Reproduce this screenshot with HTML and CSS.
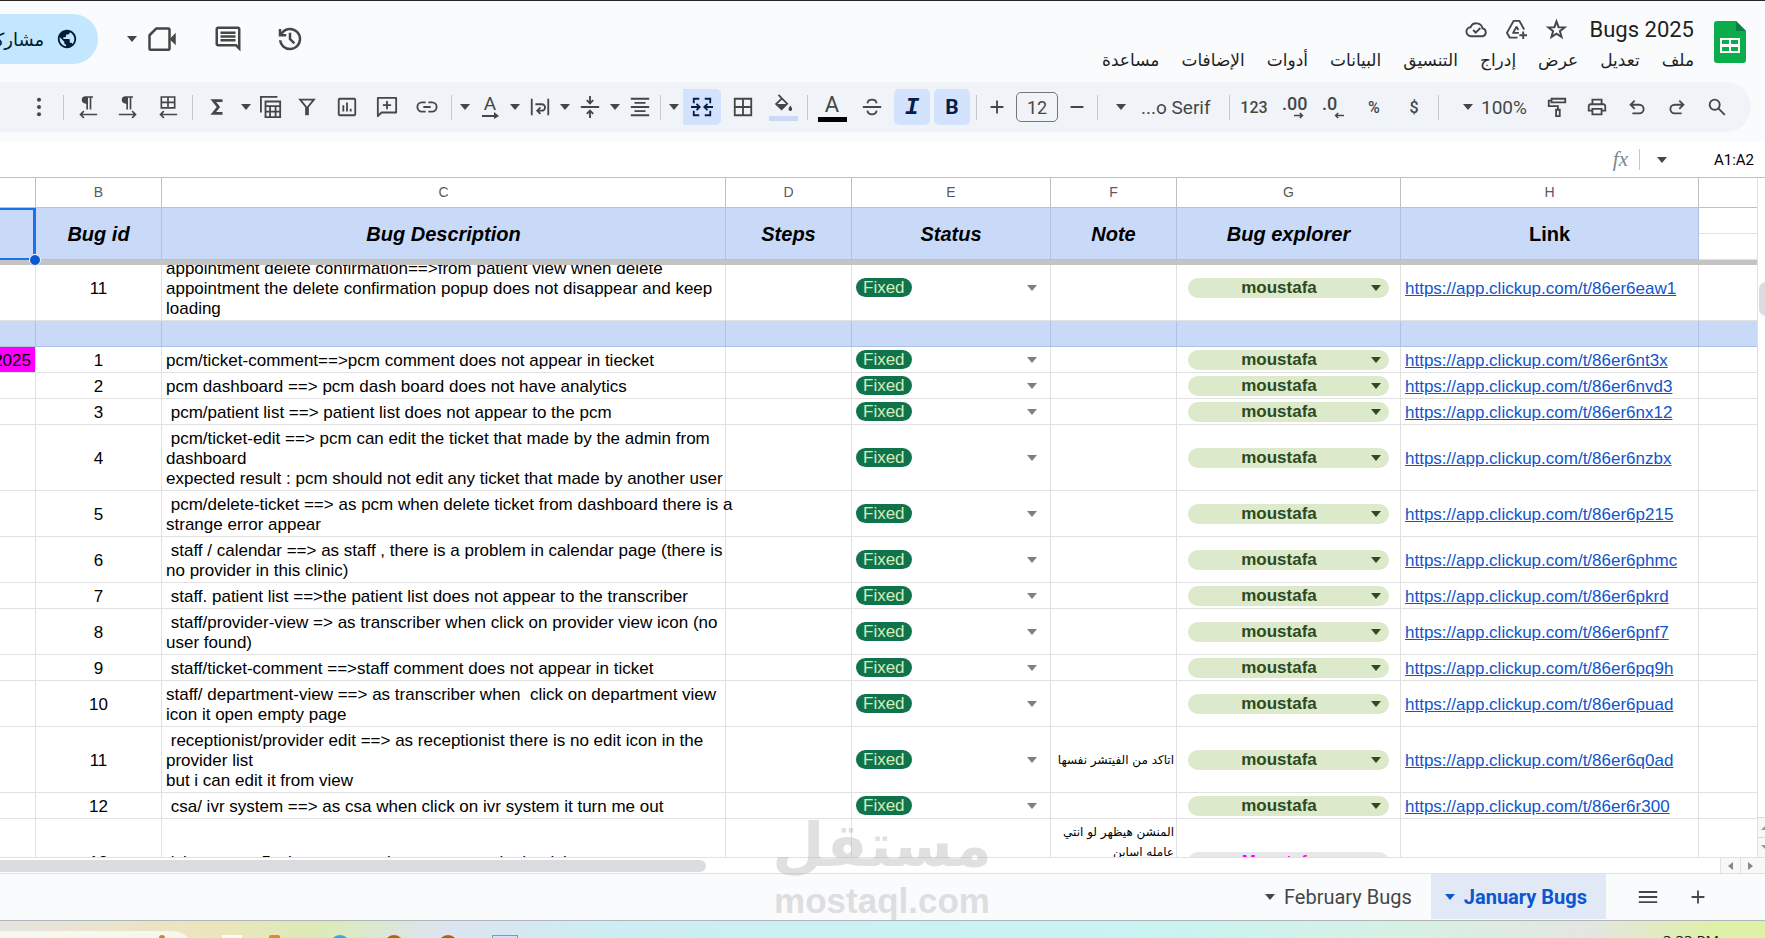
FILE: index.html
```html
<!DOCTYPE html>
<html lang="ar" dir="rtl">
  <head>
    <meta charset="UTF-8" />
    <meta name="viewport" content="width=device-width, initial-scale=1.0" />
    <title>Bugs 2025</title>
    <link rel="stylesheet" href="styles.css">
  </head>

  <body>
    <!-- icon sprite -->
    <svg class="sprite" aria-hidden="true">
      <symbol id="caret" viewBox="0 0 10 6"><path d="M0 0h10L5 6z" fill="currentColor"/></symbol>
      <symbol id="history" viewBox="0 0 24 24"><path fill="currentColor" d="M12 21q-3.45 0-6.012-2.287T3.05 13H5.1q.35 2.6 2.313 4.3T12 19q2.925 0 4.963-2.037T19 12t-2.037-4.962T12 5q-1.725 0-3.225.8T6.25 8H9v2H3V4h2v2.35q1.275-1.6 3.113-2.475T12 3q1.875 0 3.513.713t2.85 1.924 1.925 2.85T21 12t-.712 3.513-1.925 2.85-2.85 1.925T12 21m2.8-4.8L11 12.4V7h2v4.6l3.2 3.2z"/></symbol>
      <symbol id="comment" viewBox="0 0 24 24"><path fill="currentColor" d="M21.99 4c0-1.1-.89-2-1.99-2H4c-1.1 0-2 .9-2 2v12c0 1.1.9 2 2 2h14l4 4-.01-18zM20 4v13.17L18.83 16H4V4h16zM6 12h12v2H6v-2zm0-3h12v2H6V9zm0-3h12v2H6V6z"/></symbol>
      <symbol id="meet" viewBox="0 0 24 24"><path fill="none" stroke="currentColor" stroke-width="2" stroke-linejoin="round" d="M7.500 3.500H17q1 0 1 1v15q0 1-1 1H3q-1 0-1-1V9z"/><path fill="currentColor" d="M18.500 11.500 23 7v10l-4.500-4.500z"/></symbol>
      <symbol id="globe" viewBox="0 0 24 24"><path fill="currentColor" d="M12 2C6.480 2 2 6.480 2 12s4.480 10 10 10 10-4.480 10-10S17.520 2 12 2zm-1 17.930c-3.950-.49-7-3.850-7-7.930 0-.62.08-1.210.21-1.790L9 15v1c0 1.100.9 2 2 2v1.930zm6.900-2.540c-.26-.81-1-1.390-1.900-1.390h-1v-3c0-.55-.45-1-1-1H8v-2h2c.55 0 1-.45 1-1V7h2c1.100 0 2-.9 2-2v-.41c2.930 1.190 5 4.060 5 7.410 0 2.080-.8 3.970-2.100 5.390z"/></symbol>
      <symbol id="star" viewBox="0 0 24 24"><path fill="none" stroke="currentColor" stroke-width="2" d="m12 3.500 2.200 6.100 6.300.2-5 3.900 1.800 6.200-5.300-3.600-5.300 3.600 1.800-6.200-5-3.900 6.300-.2z"/></symbol>
      <symbol id="drive" viewBox="0 0 24 24"><path fill="none" stroke="currentColor" stroke-width="2" stroke-linejoin="round" d="M13 20.500H5L2 15.500 9 3h6l5 9M12 9l-3.500 6.500h6M12 9l2 3.500M19 14v8M15 18h8"/></symbol>
      <symbol id="cloud" viewBox="0 0 24 24"><path fill="none" stroke="currentColor" stroke-width="2" d="M6.500 19a4.700 4.700 0 0 1-.6-9.400 6.500 6.500 0 0 1 12.400 1.200A4.200 4.200 0 0 1 18.500 19zM8.500 12.500l2.700 2.700 4.800-4.800"/></symbol>
      <symbol id="search" viewBox="0 0 24 24"><g fill="none" stroke="currentColor" stroke-width="2"><circle cx="9.500" cy="9.500" r="5.500"/><path d="m13.500 13.500 7 7"/></g></symbol>
      <symbol id="undo" viewBox="0 0 24 24"><path fill="none" stroke="currentColor" stroke-width="2" d="M9.500 5 5 9.500 9.500 14M5 9.500h9.500a4.700 4.700 0 0 1 0 9.500H7"/></symbol>
      <symbol id="redo" viewBox="0 0 24 24"><path fill="none" stroke="currentColor" stroke-width="2" d="M14.500 5 19 9.500 14.500 14M19 9.500H9.500a4.700 4.700 0 0 0 0 9.500H17"/></symbol>
      <symbol id="print" viewBox="0 0 24 24"><path fill="currentColor" d="M19 8h-1V3H6v5H5c-1.660 0-3 1.340-3 3v6h4v4h12v-4h4v-6c0-1.660-1.340-3-3-3zM8 5h8v3H8V5zm8 12v2H8v-4h8v2zm2-2v-2H6v2H4v-4c0-.55.45-1 1-1h14c.55 0 1 .45 1 1v4h-2z"/></symbol>
      <symbol id="roller" viewBox="0 0 24 24"><g fill="none" stroke="currentColor" stroke-width="2"><path d="M6 3h15v4H6zM6 5H3v6h10v4"/><path d="M11 15h4v7h-4z"/></g></symbol>
      <symbol id="arrow-l" viewBox="0 0 12 8"><path fill="none" stroke="currentColor" stroke-width="2" d="M12 4H2M5 1 2 4l3 3"/></symbol>
      <symbol id="arrow-r" viewBox="0 0 12 8"><path fill="none" stroke="currentColor" stroke-width="2" d="M0 4h10M7 1l3 3-3 3"/></symbol>
      <symbol id="arrow-long" viewBox="0 0 17 7"><path fill="none" stroke="currentColor" stroke-width="2" d="M0 4h13"/><path fill="currentColor" d="m12 0 5 4-5 3z"/></symbol>
      <symbol id="plus" viewBox="0 0 24 24"><path fill="none" stroke="currentColor" stroke-width="2" d="M12 5v14M5 12h14"/></symbol>
      <symbol id="minus" viewBox="0 0 24 24"><path fill="none" stroke="currentColor" stroke-width="2" d="M5 12h14"/></symbol>
      <symbol id="strike" viewBox="0 0 24 24"><path fill="none" stroke="currentColor" stroke-width="2" d="M2 12h20M17 8q-.5-4-5-4T7 8M7 16q.5 4 5 4t5-4"/></symbol>
      <symbol id="bucket" viewBox="0 0 24 24"><path fill="none" stroke="currentColor" stroke-width="2" d="m7 1 9.500 9.500-6 6L4.500 11l6-6"/><path fill="currentColor" d="M4.500 11h12l-6 6zM20 12.500s-2 2.600-2 4a2 2 0 0 0 4 0c0-1.400-2-4-2-4z"/></symbol>
      <symbol id="borders" viewBox="0 0 24 24"><path fill="none" stroke="currentColor" stroke-width="2" d="M3 3h18v18H3zM12 3v18M3 12h18"/></symbol>
      <symbol id="merge" viewBox="0 0 24 24"><path fill="none" stroke="currentColor" stroke-width="2" d="M9 3H3v5M3 16v5h6M15 3h6v5M21 16v5h-6M0 12h9M6 8.500 9.500 12 6 15.500M24 12h-9M18 8.500 14.500 12l3.500 3.500"/></symbol>
      <symbol id="align" viewBox="0 0 24 24"><path fill="none" stroke="currentColor" stroke-width="2" d="M2 3h20M6 7.500h12M2 12h20M6 16.500h12M2 21h20"/></symbol>
      <symbol id="valign" viewBox="0 0 24 24"><path fill="none" stroke="currentColor" stroke-width="2" d="M2 12h20M12 0v7M8.500 4.500 12 8l3.500-3.500M12 24v-7M8.500 19.500 12 16l3.500 3.500"/></symbol>
      <symbol id="wrap" viewBox="0 0 24 24"><path fill="none" stroke="currentColor" stroke-width="2" d="M3 3v18M21 3v18M7 9h7a3.500 3.500 0 0 1 0 7h-4M12.500 12.500 9 16l3.500 3.500"/></symbol>
      <symbol id="link" viewBox="0 0 24 24"><path fill="none" stroke="currentColor" stroke-width="2" d="M10.500 17H6.500a5 5 0 0 1 0-10h4M13.500 7h4a5 5 0 0 1 0 10h-4M8 12h8"/></symbol>
      <symbol id="add-comment" viewBox="0 0 24 24"><path fill="none" stroke="currentColor" stroke-width="2" stroke-linejoin="round" d="M2 22V2h20v16H6zM12 5.500v9M7.500 10h9"/></symbol>
      <symbol id="chart" viewBox="0 0 24 24"><g fill="none" stroke="currentColor" stroke-width="2"><rect x="3" y="3" width="18" height="18" rx="1"/><path d="M8 10v7M12 7v10M16 14v3"/></g></symbol>
      <symbol id="filter" viewBox="0 0 24 24"><path fill="none" stroke="currentColor" stroke-width="2" d="M4.500 4h15L13 12v8h-2v-8z"/></symbol>
      <symbol id="table" viewBox="0 0 24 24"><path fill="none" stroke="currentColor" stroke-width="2" d="M1 18V1h18M6 6h16v17H6zM6 11h16M6 17h16M11 11v12M17 11v12"/></symbol>
      <symbol id="sigma" viewBox="0 0 24 24"><path fill="none" stroke="currentColor" stroke-width="3" d="M18 5H8l5.500 7L8 19h10"/></symbol>
      <symbol id="rtl-sheet" viewBox="0 0 24 28"><path fill="none" stroke="currentColor" stroke-width="2" d="M4 2h16v13H4zM12 2v13M4 8.500h16M23 23H3M7 19l-4 4 4 4"/></symbol>
      <symbol id="para-r" viewBox="0 0 24 28"><path fill="currentColor" d="M11 2H9a3.500 3.500 0 0 0 0 7h2z"/><path fill="none" stroke="currentColor" stroke-width="2" d="M18 2H9a3.500 3.500 0 0 0 0 7h2M11 2v15M15 2v15M1 23h20M17 19l4 4-4 4"/></symbol>
      <symbol id="para-l" viewBox="0 0 24 28"><path fill="currentColor" d="M11 2H9a3.500 3.500 0 0 0 0 7h2z"/><path fill="none" stroke="currentColor" stroke-width="2" d="M18 2H9a3.500 3.500 0 0 0 0 7h2M11 2v15M15 2v15M23 23H3M7 19l-4 4 4 4"/></symbol>
      <symbol id="more" viewBox="0 0 24 24"><g fill="currentColor"><circle cx="12" cy="4" r="2.200"/><circle cx="12" cy="12" r="2.200"/><circle cx="12" cy="20" r="2.200"/></g></symbol>
      <symbol id="menu" viewBox="0 0 24 24"><path fill="none" stroke="currentColor" stroke-width="2" d="M2 6.500h20M2 12h20M2 17.500h20"/></symbol>
    </svg>

    <header class="top">
      <svg class="logo" viewBox="0 0 32 42"><path fill="#0bac4b" d="M3 0h19l10 10v29q0 3-3 3H3q-3 0-3-3V3q0-3 3-3z"/><path fill="#0b8043" d="M22 0v10h10z"/><path fill="#fff" d="M6 17h20v15H6z"/><path fill="#0bac4b" d="M8 19h7v4H8zm9 0h7v4h-7zm-9 7h7v4H8zm9 0h7v4h-7z"/></svg>
      <div class="doc">
        <div class="doc-row">
          <h1 class="doc-title" dir="ltr">Bugs 2025</h1>
          <button class="small-btn" aria-label="star"><svg><use href="#star"/></svg></button>
          <button class="small-btn" aria-label="drive"><svg><use href="#drive"/></svg></button>
          <button class="small-btn" aria-label="saved"><svg><use href="#cloud"/></svg></button>
        </div>
        <nav class="menus">
          <button>ملف</button>
          <button>تعديل</button>
          <button>عرض</button>
          <button>إدراج</button>
          <button>التنسيق</button>
          <button>البيانات</button>
          <button>أدوات</button>
          <button>الإضافات</button>
          <button>مساعدة</button>
        </nav>
      </div>
      <div class="actions">
        <button class="big-btn" aria-label="history"><svg><use href="#history"/></svg></button>
        <button class="big-btn" aria-label="comments"><svg><use href="#comment"/></svg></button>
        <button class="meet-btn" aria-label="meet"><svg><use href="#meet"/></svg><svg class="caret"><use href="#caret"/></svg></button>
        <button class="share-btn"><svg><use href="#globe"/></svg>مشاركة</button>
      </div>
    </header>

    <div class="toolbar">
      <button class="tool" aria-label="search"><svg><use href="#search"/></svg></button>
      <button class="tool" aria-label="redo"><svg><use href="#redo"/></svg></button>
      <button class="tool" aria-label="undo"><svg><use href="#undo"/></svg></button>
      <button class="tool" aria-label="print"><svg><use href="#print"/></svg></button>
      <button class="tool" aria-label="paint format"><svg><use href="#roller"/></svg></button>
      <div class="pick zoom"><select aria-label="zoom"><option>100%</option></select><svg class="caret"><use href="#caret"/></svg></div>
      <i class="sep"></i>
      <button class="tool">$</button>
      <button class="tool">%</button>
      <button class="tool decimals left">.0<svg><use href="#arrow-l"/></svg></button>
      <button class="tool decimals">.00<svg><use href="#arrow-r"/></svg></button>
      <button class="tool">123</button>
      <i class="sep"></i>
      <div class="pick font"><select aria-label="font"><option>...o Serif</option></select><svg class="caret"><use href="#caret"/></svg></div>
      <i class="sep"></i>
      <button class="step" aria-label="smaller"><svg><use href="#minus"/></svg></button>
      <input class="size" aria-label="font size" value="12" />
      <button class="step" aria-label="bigger"><svg><use href="#plus"/></svg></button>
      <i class="sep"></i>
      <button class="tool active bold">B</button>
      <button class="tool active italic">I</button>
      <button class="tool" aria-label="strikethrough"><svg><use href="#strike"/></svg></button>
      <button class="tool color-btn text-color">A</button>
      <i class="sep"></i>
      <button class="tool color-btn fill-color" aria-label="fill color"><svg><use href="#bucket"/></svg></button>
      <button class="tool" aria-label="borders"><svg><use href="#borders"/></svg></button>
      <button class="tool active merge" aria-label="merge"><svg><use href="#merge"/></svg></button>
      <button class="drop" aria-label="merge options"><svg class="caret"><use href="#caret"/></svg></button>
      <i class="sep"></i>
      <button class="tool-drop" aria-label="align"><svg><use href="#align"/></svg><svg class="caret"><use href="#caret"/></svg></button>
      <button class="tool-drop" aria-label="vertical align"><svg><use href="#valign"/></svg><svg class="caret"><use href="#caret"/></svg></button>
      <button class="tool-drop" aria-label="wrap"><svg><use href="#wrap"/></svg><svg class="caret"><use href="#caret"/></svg></button>
      <button class="tool-drop" aria-label="rotate"><span class="rotate">A<svg><use href="#arrow-long"/></svg></span><svg class="caret"><use href="#caret"/></svg></button>
      <i class="sep"></i>
      <button class="tool" aria-label="link"><svg><use href="#link"/></svg></button>
      <button class="tool" aria-label="add comment"><svg><use href="#add-comment"/></svg></button>
      <button class="tool" aria-label="chart"><svg><use href="#chart"/></svg></button>
      <button class="tool" aria-label="filter"><svg><use href="#filter"/></svg></button>
      <button class="tool-drop" aria-label="tables"><svg><use href="#table"/></svg><svg class="caret"><use href="#caret"/></svg></button>
      <button class="tool" aria-label="functions"><svg><use href="#sigma"/></svg></button>
      <i class="sep"></i>
      <button class="tool" aria-label="sheet direction"><svg class="tall"><use href="#rtl-sheet"/></svg></button>
      <button class="tool" aria-label="left to right"><svg class="tall"><use href="#para-r"/></svg></button>
      <button class="tool" aria-label="right to left"><svg class="tall"><use href="#para-l"/></svg></button>
      <i class="sep"></i>
      <button class="tool" aria-label="more"><svg><use href="#more"/></svg></button>
    </div>

    <div class="formula">
      <input class="name-box" dir="ltr" aria-label="name box" value="A1:A2" />
      <button class="name-drop" aria-label="ranges"><svg class="caret"><use href="#caret"/></svg></button>
      <i class="sep"></i>
      <label class="fx" for="formula">fx</label>
      <input class="formula-input" id="formula" />
    </div>

    <main class="grid" dir="ltr">
      <div class="sheet">
        <table class="cells frozen">
          <colgroup><col class="c-a"><col class="c-b"><col><col class="c-d"><col class="c-e"><col class="c-f"><col class="c-g"><col class="c-h"><col class="c-i"></colgroup>
          <tr class="letters"><th></th><th>B</th><th>C</th><th>D</th><th>E</th><th>F</th><th>G</th><th>H</th><th></th></tr>
          <tr class="titles"><th class="selected"><i class="handle"></i></th><th>Bug id</th><th>Bug Description</th><th>Steps</th><th>Status</th><th>Note</th><th>Bug explorer</th><th class="plain">Link</th><td class="split"><i></i></td></tr>
        </table>
        <div class="freeze-bar"></div>
        <div class="rows">
          <table class="cells data">
            <colgroup><col class="c-a"><col class="c-b"><col><col class="c-d"><col class="c-e"><col class="c-f"><col class="c-g"><col class="c-h"><col class="c-i"></colgroup>
            <tr>
              <td></td><td class="id">11</td>
              <td class="desc">appointment delete confirmation==&gt;from patient view when delete<br>appointment the delete confirmation popup does not disappear and keep<br>loading</td>
              <td></td><td><div class="status"><select aria-label="status"><option>Fixed</option></select></div></td><td class="note"></td>
              <td><div class="owner"><select aria-label="explorer"><option>moustafa</option></select></div></td>
              <td class="url"><a href="#">https://app.clickup.com/t/86er6eaw1</a></td><td></td>
            </tr>
            <tr class="band"><td></td><td></td><td></td><td></td><td></td><td></td><td></td><td></td><td></td></tr>
            <tr>
              <td class="date"><span>1/1/2025</span></td><td class="id">1</td>
              <td class="desc">pcm/ticket-comment==&gt;pcm comment does not appear in tiecket</td>
              <td></td><td><div class="status"><select aria-label="status"><option>Fixed</option></select></div></td><td class="note"></td>
              <td><div class="owner"><select aria-label="explorer"><option>moustafa</option></select></div></td>
              <td class="url"><a href="#">https://app.clickup.com/t/86er6nt3x</a></td><td></td>
            </tr>
            <tr>
              <td></td><td class="id">2</td>
              <td class="desc">pcm dashboard ==&gt; pcm dash board does not have analytics</td>
              <td></td><td><div class="status"><select aria-label="status"><option>Fixed</option></select></div></td><td class="note"></td>
              <td><div class="owner"><select aria-label="explorer"><option>moustafa</option></select></div></td>
              <td class="url"><a href="#">https://app.clickup.com/t/86er6nvd3</a></td><td></td>
            </tr>
            <tr>
              <td></td><td class="id">3</td>
              <td class="desc"> pcm/patient list ==&gt; patient list does not appear to the pcm</td>
              <td></td><td><div class="status"><select aria-label="status"><option>Fixed</option></select></div></td><td class="note"></td>
              <td><div class="owner"><select aria-label="explorer"><option>moustafa</option></select></div></td>
              <td class="url"><a href="#">https://app.clickup.com/t/86er6nx12</a></td><td></td>
            </tr>
            <tr>
              <td></td><td class="id">4</td>
              <td class="desc"> pcm/ticket-edit ==&gt; pcm can edit the ticket that made by the admin from<br>dashboard<br>expected result : pcm should not edit any ticket that made by another user</td>
              <td></td><td><div class="status"><select aria-label="status"><option>Fixed</option></select></div></td><td class="note"></td>
              <td><div class="owner"><select aria-label="explorer"><option>moustafa</option></select></div></td>
              <td class="url"><a href="#">https://app.clickup.com/t/86er6nzbx</a></td><td></td>
            </tr>
            <tr>
              <td></td><td class="id">5</td>
              <td class="desc"> pcm/delete-ticket ==&gt; as pcm when delete ticket from dashboard there is a<br>strange error appear</td>
              <td></td><td><div class="status"><select aria-label="status"><option>Fixed</option></select></div></td><td class="note"></td>
              <td><div class="owner"><select aria-label="explorer"><option>moustafa</option></select></div></td>
              <td class="url"><a href="#">https://app.clickup.com/t/86er6p215</a></td><td></td>
            </tr>
            <tr>
              <td></td><td class="id">6</td>
              <td class="desc"> staff / calendar ==&gt; as staff , there is a problem in calendar page (there is<br>no provider in this clinic)</td>
              <td></td><td><div class="status"><select aria-label="status"><option>Fixed</option></select></div></td><td class="note"></td>
              <td><div class="owner"><select aria-label="explorer"><option>moustafa</option></select></div></td>
              <td class="url"><a href="#">https://app.clickup.com/t/86er6phmc</a></td><td></td>
            </tr>
            <tr>
              <td></td><td class="id">7</td>
              <td class="desc"> staff. patient list ==&gt;the patient list does not appear to the transcriber</td>
              <td></td><td><div class="status"><select aria-label="status"><option>Fixed</option></select></div></td><td class="note"></td>
              <td><div class="owner"><select aria-label="explorer"><option>moustafa</option></select></div></td>
              <td class="url"><a href="#">https://app.clickup.com/t/86er6pkrd</a></td><td></td>
            </tr>
            <tr>
              <td></td><td class="id">8</td>
              <td class="desc"> staff/provider-view =&gt; as transcriber when click on provider view icon (no<br>user found)</td>
              <td></td><td><div class="status"><select aria-label="status"><option>Fixed</option></select></div></td><td class="note"></td>
              <td><div class="owner"><select aria-label="explorer"><option>moustafa</option></select></div></td>
              <td class="url"><a href="#">https://app.clickup.com/t/86er6pnf7</a></td><td></td>
            </tr>
            <tr>
              <td></td><td class="id">9</td>
              <td class="desc"> staff/ticket-comment ==&gt;staff comment does not appear in ticket</td>
              <td></td><td><div class="status"><select aria-label="status"><option>Fixed</option></select></div></td><td class="note"></td>
              <td><div class="owner"><select aria-label="explorer"><option>moustafa</option></select></div></td>
              <td class="url"><a href="#">https://app.clickup.com/t/86er6pq9h</a></td><td></td>
            </tr>
            <tr>
              <td></td><td class="id">10</td>
              <td class="desc">staff/ department-view ==&gt; as transcriber when  click on department view<br>icon it open empty page</td>
              <td></td><td><div class="status"><select aria-label="status"><option>Fixed</option></select></div></td><td class="note"></td>
              <td><div class="owner"><select aria-label="explorer"><option>moustafa</option></select></div></td>
              <td class="url"><a href="#">https://app.clickup.com/t/86er6puad</a></td><td></td>
            </tr>
            <tr>
              <td></td><td class="id">11</td>
              <td class="desc"> receptionist/provider edit ==&gt; as receptionist there is no edit icon in the<br>provider list<br>but i can edit it from view</td>
              <td></td><td><div class="status"><select aria-label="status"><option>Fixed</option></select></div></td><td class="note" dir="rtl">اتاكد من الفيتشر نفسها</td>
              <td><div class="owner"><select aria-label="explorer"><option>moustafa</option></select></div></td>
              <td class="url"><a href="#">https://app.clickup.com/t/86er6q0ad</a></td><td></td>
            </tr>
            <tr>
              <td></td><td class="id">12</td>
              <td class="desc"> csa/ ivr system ==&gt; as csa when click on ivr system it turn me out</td>
              <td></td><td><div class="status"><select aria-label="status"><option>Fixed</option></select></div></td><td class="note"></td>
              <td><div class="owner"><select aria-label="explorer"><option>moustafa</option></select></div></td>
              <td class="url"><a href="#">https://app.clickup.com/t/86er6r300</a></td><td></td>
            </tr>
            <tr>
              <td></td><td class="id">13</td>
              <td class="desc">ticket-scope 5 when put mention user name in the ticket comment</td>
              <td></td><td></td><td class="note" dir="rtl">المنشن هيظهر لو انتي<br>عامله اساين<br>للتيكت<br>نفسها</td>
              <td><div class="owner grey"><select aria-label="explorer"><option>Moustafa</option></select></div></td>
              <td></td><td></td>
            </tr>
          </table>
        </div>
      </div>
      <div class="vscroll">
        <div class="vthumb"></div>
        <div class="varrow up"></div>
        <div class="varrow down"></div>
      </div>
    </main>

    <div class="hscroll" dir="ltr">
      <div class="hthumb"></div>
      <div class="harrow left"></div>
      <div class="harrow right"></div>
    </div>

    <footer class="tabs">
      <button class="tab-icon" aria-label="add sheet"><svg><use href="#plus"/></svg></button>
      <button class="tab-icon" aria-label="all sheets"><svg><use href="#menu"/></svg></button>
      <button class="tab current">January Bugs<svg class="caret"><use href="#caret"/></svg></button>
      <button class="tab">February Bugs<svg class="caret"><use href="#caret"/></svg></button>
    </footer>

    <div class="taskbar" dir="ltr">
      <div class="task-search"><i></i></div>
      <i class="task white"></i>
      <i class="task orange"></i>
      <i class="task blue"></i>
      <i class="task brown"></i>
      <i class="task brown"></i>
      <i class="task window"></i>
      <time class="clock">3:33 PM</time>
    </div>

    <div class="watermark">
      <span class="wm-ar">مستقل</span>
      <span class="wm-en" dir="ltr">mostaql.com</span>
    </div>
  </body>
</html>
```

FILE: styles.css
```css
* {
  box-sizing: border-box;
}

body {
  margin: 0;
  height: 100vh;
  display: flex;
  flex-direction: column;
  overflow: hidden;
  position: relative;
  border-top: 1px solid #28272c;
  background: #f9fbfd;
  color: #444746;
  font-family: Roboto, "DejaVu Sans", sans-serif;
}

button,
input,
select {
  font: inherit;
  color: inherit;
  border: 0;
  background: none;
  padding: 0;
  margin: 0;
  appearance: none;
  outline: none;
}

button,
select {
  cursor: pointer;
}

svg {
  flex: none;
}

.sprite {
  display: none;
}

.caret {
  width: 10px;
  height: 6px;
}

/* header */
.top {
  height: 81px;
  flex: none;
  display: flex;
  padding-right: 19px;
}

.logo {
  width: 32px;
  height: 42px;
  margin-top: 20px;
}

.doc {
  flex: 1;
  padding: 13px 20px 0 0;
}

.doc-row {
  display: flex;
  align-items: center;
  height: 30px;
}

.doc-title {
  margin: 0 0 0 13px;
  font-size: 22px;
  font-weight: 400;
  color: #1f1f1f;
}

.small-btn {
  width: 40px;
  height: 30px;
  display: flex;
  align-items: center;
  justify-content: center;
}

.small-btn svg {
  width: 23px;
  height: 23px;
}

.menus {
  display: flex;
  gap: 22px;
  height: 32px;
  font-size: 17px;
  color: #1f1f1f;
}

.actions {
  display: flex;
  align-items: center;
  height: 76px;
  margin-left: -34px;
}

.big-btn {
  width: 50px;
  height: 50px;
  margin-left: 12px;
}

.big-btn svg,
.meet-btn svg:first-child {
  width: 30px;
  height: 30px;
  vertical-align: middle;
}

.meet-btn {
  width: 70px;
  height: 50px;
  display: flex;
  align-items: center;
  gap: 10px;
  padding-right: 14px;
}

.share-btn {
  height: 50px;
  margin-right: 23px;
  padding: 0 20px;
  display: flex;
  align-items: center;
  gap: 12px;
  border-radius: 25px;
  background: #c2e7ff;
  color: #001d35;
  font-size: 18px;
}

.share-btn svg {
  width: 22px;
  height: 22px;
}

/* toolbar */
.toolbar {
  height: 50px;
  flex: none;
  display: flex;
  align-items: center;
  margin-right: 14px;
  padding-right: 14px;
  border-radius: 0 25px 25px 0;
  background: #f0f4f9;
  overflow: hidden;
}

.toolbar > * {
  flex: none;
}

.tool {
  width: 36px;
  height: 36px;
  margin: 0 2px;
  display: flex;
  align-items: center;
  justify-content: center;
  border-radius: 5px;
  font-size: 16px;
  font-weight: 500;
}

.tool svg,
.step svg,
.tool-drop > svg:first-child {
  width: 22px;
  height: 22px;
}

.tool svg.tall {
  width: 20px;
  height: 24px;
}

.sep {
  width: 1px;
  height: 25px;
  margin: 0 4px;
  background: #c7c7c7;
}

.pick {
  display: flex;
  align-items: center;
  justify-content: space-between;
  height: 36px;
  font-size: 19px;
}

.zoom {
  width: 94px;
  padding: 0 10px 0 20px;
}

.font {
  width: 123px;
  padding: 0 14px;
}

.pick select {
  direction: ltr;
}

.tool.decimals {
  flex-direction: column;
  align-items: flex-start;
  direction: ltr;
  padding-left: 6px;
  font-size: 18px;
  line-height: 16px;
}

.tool.decimals svg {
  width: 10px;
  height: 7px;
  margin-left: 12px;
}

.step {
  width: 32px;
  height: 36px;
}

.step svg {
  vertical-align: middle;
}

.size {
  width: 42px;
  height: 30px;
  margin: 0 3px;
  border: 1px solid #747775;
  border-radius: 5px;
  text-align: center;
  font-size: 18px;
}

.active {
  background: #d3e3fd;
  color: #041e49;
}

.bold {
  font-size: 21px;
  font-weight: 700;
}

.italic {
  font-family: "Liberation Mono", monospace;
  font-size: 24px;
  font-weight: 700;
  font-style: italic;
}

.tool.merge {
  margin-left: 0;
  width: 38px;
  border-radius: 0 5px 5px 0;
}

.tool.color-btn {
  flex-direction: column;
  height: 34px;
  font-size: 22px;
  font-weight: 400;
  border-radius: 0;
}

.text-color::after,
.fill-color::after {
  content: "";
  width: 29px;
  height: 5px;
  background: #000;
}

.fill-color::after {
  background: #c9daf8;
}

.drop {
  width: 18px;
  height: 36px;
}

.drop .caret,
.name-drop .caret {
  display: block;
  margin: auto;
}

.tool-drop {
  width: 50px;
  height: 36px;
  display: flex;
  align-items: center;
  justify-content: space-between;
  padding: 0 5px 0 4px;
}

.rotate {
  display: flex;
  flex-direction: column;
  align-items: center;
  width: 22px;
  font-size: 19px;
  line-height: 16px;
}

.rotate svg {
  width: 17px;
  height: 7px;
}

/* formula bar */
.formula {
  height: 35px;
  flex: none;
  margin-top: 10px;
  display: flex;
  align-items: center;
  background: #fff;
}

.name-box {
  width: 86px;
  padding-right: 11px;
  text-align: right;
  font-size: 15px;
  color: #000;
}

.name-drop {
  width: 35px;
}

.formula .sep {
  height: 21px;
}

.fx {
  margin: 0 7px;
  font: italic 21px "Liberation Serif", serif;
  color: #80868b;
}

.formula-input {
  flex: 1;
}

/* grid */
.grid {
  flex: 1;
  min-height: 0;
  display: flex;
  border-top: 1px solid #c0c0c0;
  background: #fff;
}

.sheet {
  flex: 1;
  min-width: 0;
  display: flex;
  flex-direction: column;
}

.cells {
  width: 100%;
  flex: none;
  table-layout: fixed;
  border-spacing: 0;
  font-family: "Liberation Sans", Arial, sans-serif;
  font-size: 17px;
  line-height: 20px;
  color: #000;
}

.c-a { width: 36px; }
.c-b { width: 126px; }
.c-d { width: 126px; }
.c-e { width: 199px; }
.c-f { width: 126px; }
.c-g { width: 224px; }
.c-h { width: 298px; }
.c-i { width: 58px; }

.cells th,
.cells td {
  padding: 0;
  border-right: 1px solid #e1e1e1;
  border-bottom: 1px solid #e1e1e1;
}

.cells tr > :last-child {
  border-right: 0;
}

.letters th {
  height: 30px;
  padding-bottom: 2px;
  border-color: #c0c0c0 !important;
  font-size: 14px;
  font-weight: 400;
  color: #575b5f;
}

.titles th {
  height: 52px;
  border-color: #afc0e0;
  background: #c9daf8;
  font-size: 20px;
  font-style: italic;
}

.titles .plain {
  font-style: normal;
}

.titles .selected {
  position: relative;
  border-top: 2px solid #1a73e8;
  border-right: 3px solid #1a73e8;
  border-bottom: 2px solid #1a73e8;
}

.handle {
  position: absolute;
  right: -8px;
  bottom: -8px;
  width: 12px;
  height: 12px;
  border: 1px solid #fff;
  border-radius: 50%;
  background: #0b57d0;
}

.split i {
  display: block;
  height: 26px;
  margin-bottom: 25px;
  border-bottom: 1px solid #e1e1e1;
}

.freeze-bar {
  height: 5px;
  flex: none;
  background: #c4c4c4;
}

.rows {
  flex: 1;
  min-height: 0;
  overflow: hidden;
}

/* scrolled part way into the first row */
.data {
  margin-top: -10px;
}

.data td {
  height: 26px;
}

.data .desc {
  padding: 4px 0 1px 4px;
  white-space: pre;
}

.data .id {
  padding-top: 2px;
  text-align: center;
}

.data .band td {
  background: #c9daf8;
  border-color: #afc0e0;
}

.data .date {
  background: #f0f;
  overflow: hidden;
}

.date span {
  display: flex;
  justify-content: flex-end;
  padding: 2px 4px 0 0;
}

.data .note {
  padding: 3px 3px 2px;
  font-family: "DejaVu Sans", sans-serif;
  font-size: 12px;
  white-space: nowrap;
}

.data .url {
  padding: 2px 0 0 4px;
}

.url a {
  color: #1155cc;
}

.status,
.owner {
  display: flex;
  align-items: center;
  justify-content: space-between;
}

.status {
  padding: 0 13px 0 4px;
}

.status select {
  width: 56px;
  height: 19px;
  padding-left: 7px;
  border-radius: 10px;
  background: #11734b;
  color: #d4edbc;
}

.status::after,
.owner::after {
  content: "";
  border: 5px solid transparent;
  border-top: 6px solid #808080;
  border-bottom: 0;
}

.owner {
  height: 20px;
  margin: 0 11px;
  border-radius: 10px;
  background: #dce9cb;
  color: #2f4a20;
  font-weight: 700;
}

.owner select {
  width: 182px;
  height: 20px;
  text-align: center;
  text-align-last: center;
}

.owner::after {
  margin-right: 8px;
  border-top-color: #2f4a20;
}

.owner.grey {
  background: #e8e8e8;
  color: #f0f;
}

.owner.grey::after {
  visibility: hidden;
}

/* scrollbars */
.vscroll {
  width: 8px;
  flex: none;
  display: flex;
  flex-direction: column;
  overflow: hidden;
  border-left: 1px solid #e1e1e1;
}

.vthumb {
  width: 14px;
  height: 34px;
  margin: 104px 0 auto 1px;
  border-radius: 7px;
  background: #dadce0;
}

.varrow {
  height: 20px;
  padding: 7px 0 0 3px;
  border-top: 1px solid #d5d9e0;
  background: #f8f8f8;
}

.varrow::before {
  content: "";
  display: block;
  width: 0;
  border: 5px solid transparent;
  border-top-width: 0;
  border-bottom-color: #999;
}

.varrow.down::before {
  border-top: 5px solid #999;
  border-bottom: 0;
}

.hscroll {
  height: 17px;
  flex: none;
  display: flex;
  align-items: center;
  border-top: 1px solid #e1e1e1;
  border-bottom: 1px solid #e1e1e1;
  background: #fff;
}

.hthumb {
  width: 40%;
  height: 12px;
  margin-right: auto;
  border-radius: 0 6px 6px 0;
  background: #dadce0;
}

.harrow {
  width: 20px;
  height: 15px;
  padding: 4px 7px;
  border-left: 1px solid #e1e1e1;
  background: #f8f8f8;
}

.harrow.right {
  width: 25px;
}

.harrow::before {
  content: "";
  display: block;
  width: 0;
  border: 4px solid transparent;
  border-left-width: 0;
  border-right: 5px solid #888;
}

.harrow.right::before {
  border-right: 0;
  border-left: 5px solid #888;
}

/* sheet tabs */
.tabs {
  height: 46px;
  flex: none;
  display: flex;
  padding-right: 42px;
}

.tab-icon {
  width: 50px;
  height: 46px;
}

.tab-icon svg {
  width: 22px;
  height: 22px;
  vertical-align: middle;
}

.tab {
  height: 45px;
  padding: 0 19px 0 14px;
  display: flex;
  align-items: center;
  gap: 9px;
  font-size: 20px;
}

.tab.current {
  margin-right: 17px;
  background: #e1e9f7;
  color: #0b57d0;
  font-weight: 700;
}

/* desktop taskbar */
.taskbar {
  height: 18px;
  flex: none;
  display: flex;
  align-items: flex-start;
  overflow: hidden;
  border-top: 1px solid #b0b5b8;
  background: linear-gradient(90deg, #e6e3e0 0, #ece5bb 12%, #dcebb8 18%, #dde4f0 25%, #cdeef4 35%, #c8f4f2 65%, #d8f0e4 80%, #e4e6e2 90%, #dff0a8 97%);
}

.task-search {
  width: 193px;
  height: 30px;
  margin: 10px 29px 0 0;
  padding: 4px 28px;
  display: flex;
  justify-content: flex-end;
  border-radius: 0 20px 0 0;
  background: #f8f7ee;
}

.task-search i {
  width: 6px;
  border-radius: 3px;
  background: #c8822a;
}

.task {
  width: 20px;
  height: 20px;
  margin: 14px 34px 0 0;
  border-radius: 50%;
}

.white {
  margin-right: 27px;
  border-radius: 0;
  background: #fdfdf6;
}

.orange {
  width: 11px;
  margin-right: 50px;
  border-radius: 2px;
  background: #e08a28;
}

.blue {
  background: #35a8dc;
}

.brown {
  background: #b8600c;
}

.window {
  width: 26px;
  border: 1px solid #58a8c8;
  border-radius: 0;
  background: #cfe0f8;
}

.clock {
  margin: 9px 46px 0 auto;
  font: 15px "Open Sans", sans-serif;
  color: #1a1a1a;
}

/* watermark */
.watermark {
  position: absolute;
  left: 776px;
  top: 808px;
  width: 212px;
  display: flex;
  flex-direction: column;
  align-items: center;
  color: #b4b4b4;
  opacity: 0.4;
  pointer-events: none;
}

.wm-ar {
  font: 700 60px/72px "DejaVu Sans", sans-serif;
}

.wm-en {
  font: 700 35px/40px "Liberation Sans", sans-serif;
}
```
